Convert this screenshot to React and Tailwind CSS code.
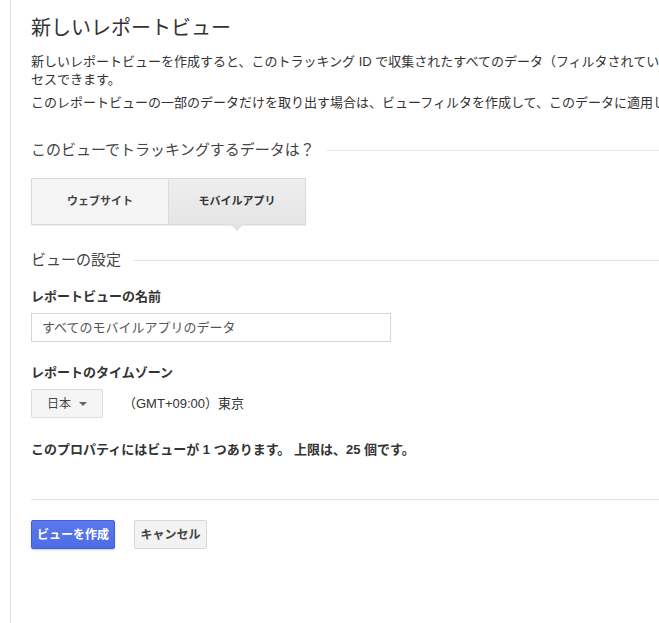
import React from "react";

export default function App() {
  const font = { fontFamily: '"Liberation Sans", "Noto Sans CJK JP", sans-serif' };
  return (
    <div className="w-[659px] h-[623px] overflow-hidden bg-white" style={font}>
      <div className="ml-[10px] h-full w-[800px] border-l border-[#e3e3e3] pl-[20px] pt-[14px]">
        <div className="w-[756px]">
          <h1 className="text-[20px] leading-[28px] font-normal text-[#333]">新しいレポートビュー</h1>
          <p className="mt-[11px] text-[13px] leading-[18px] text-[#333]">
            新しいレポートビューを作成すると、このトラッキング ID で収集されたすべてのデータ（フィルタされていないデータ）にアクセスできます。
          </p>
          <p className="mt-[5px] text-[13px] leading-[18px] text-[#333]">
            このレポートビューの一部のデータだけを取り出す場合は、ビューフィルタを作成して、このデータに適用します。
          </p>

          <div className="mt-[28px] flex items-center gap-[12px]">
            <h2 className="text-[15px] leading-[20px] font-normal text-[#444] whitespace-nowrap">
              このビューでトラッキングするデータは？
            </h2>
            <div className="h-px flex-1 bg-[#e5e5e5]" />
          </div>

          <div className="mt-[18px] flex w-[275px] h-[47px] border border-[#dadada] shadow-[0_1px_1px_rgba(0,0,0,0.06)]">
            <div className="flex flex-1 items-center justify-center bg-[#f5f5f5] text-[11px] font-bold text-[#444]">
              ウェブサイト
            </div>
            <div className="relative flex flex-1 items-center justify-center border-l border-[#dadada] bg-gradient-to-b from-[#eeeeee] to-[#e5e5e5] text-[11px] font-bold text-[#333]">
              モバイルアプリ
              <div className="absolute left-1/2 top-full -translate-x-1/2 h-0 w-0 border-l-[7px] border-r-[7px] border-t-[7px] border-l-transparent border-r-transparent border-t-[#e2e2e2]" />
            </div>
          </div>

          <div className="mt-[25px] flex items-center gap-[12px]">
            <h2 className="text-[15px] leading-[20px] font-normal text-[#444] whitespace-nowrap">ビューの設定</h2>
            <div className="h-px flex-1 bg-[#e5e5e5]" />
          </div>

          <div className="mt-[18px] text-[13px] leading-[18px] font-bold text-[#333]">レポートビューの名前</div>
          <div className="mt-[7px] flex h-[29px] w-[360px] items-center border border-[#d6d6d6] pl-[10px] text-[13px] text-[#555]">
            すべてのモバイルアプリのデータ
          </div>

          <div className="mt-[22px] text-[13px] leading-[18px] font-bold text-[#333]">レポートのタイムゾーン</div>
          <div className="mt-[7px] flex items-center">
            <div className="flex h-[29px] w-[72px] items-center justify-center gap-[8px] rounded-[2px] border border-[#dcdcdc] bg-[#f5f5f5] text-[12px] text-[#444]">
              <span>日本</span>
              <span className="h-0 w-0 border-l-[4px] border-r-[4px] border-t-[4px] border-l-transparent border-r-transparent border-t-[#666]" />
            </div>
            <span className="ml-[20px] text-[13px] text-[#333]">（GMT+09:00）東京</span>
          </div>

          <div className="mt-[23px] text-[13px] leading-[18px] font-bold text-[#333]">
            このプロパティにはビューが 1 つあります。 上限は、25 個です。
          </div>

          <div className="mt-[40px] h-px bg-[#e5e5e5]" />

          <div className="mt-[20px] flex items-center gap-[19px]">
            <button className="h-[29px] w-[84px] rounded-[2px] border border-[#3f5fd8] bg-gradient-to-b from-[#5b79ec] to-[#4e6ce5] text-[12px] font-bold text-white shadow-[0_1px_2px_rgba(0,0,0,0.2)]">
              ビューを作成
            </button>
            <button className="h-[29px] w-[73px] rounded-[2px] border border-[#d6d6d6] bg-[#f3f3f3] text-[12px] font-bold text-[#444]">
              キャンセル
            </button>
          </div>
        </div>
      </div>
    </div>
  );
}
